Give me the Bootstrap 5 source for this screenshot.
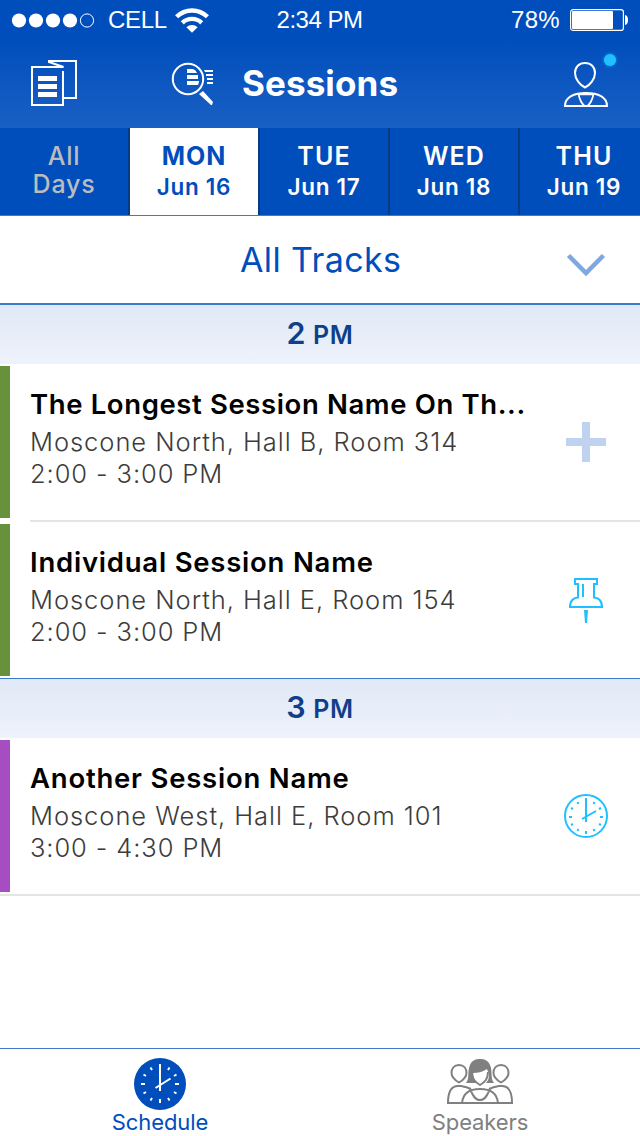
<!DOCTYPE html>
<html lang="en">
<head>
<meta charset="utf-8">
<meta name="viewport" content="width=device-width, initial-scale=1">
<title>Sessions</title>
<link rel="stylesheet" href="https://cdn.jsdelivr.net/npm/bootstrap@5.3.0/dist/css/bootstrap.min.css">
<style>
  body { font-family: Inter, "Open Sans", sans-serif; background: #fff; color: #000; }
  .app { width: 640px; height: 1136px; }
  svg { display: block; flex: none; overflow: visible; }
  .app-header { height: 128px; background: linear-gradient(#004ebc 0, #004ebc 40px, #1a60c4 100%); color: #fff; }
  .status { height: 40px; padding: 0 12px 0 11px; font: 24px/40px "Liberation Sans", sans-serif; }
  .status > div { flex: 1 1 0; }
  .cell-name { margin: 0 8px 0 13px; letter-spacing: -.35px; }
  .clock-text { letter-spacing: -.5px; }
  .charge { margin-right: 10px; letter-spacing: .3px; }
  .titlebar { height: 88px; padding: 0 22px 0 30px; }
  .titlebar h1 { font-size: 35px; font-weight: 700; line-height: 88px; margin: -2px 0 0 27px; letter-spacing: .1px; }
  .find-icon { margin-left: 93px; }
  .profile-icon { margin-bottom: 10px; }
  .days { height: 88px; background: #004ebc; border-bottom: 1px solid #3d79cc; }
  .day { flex: 0 0 130px; border-right: 2px solid #083b83; color: #fff; font-weight: 600; font-size: 22.5px; line-height: 30px; padding-top: 13px; letter-spacing: .7px; }
  .day b { display: block; font-weight: 600; font-size: 25px; letter-spacing: 1.1px; height: 31px; }
  .day.all { color: #bcbcbc; font-size: 25px; line-height: 28px; padding-top: 14px; font-weight: 500; letter-spacing: .8px; }
  .day.active { background: #fff; color: #004ebc; }
  .day.active b { font-weight: 700; letter-spacing: .9px; }
  .tracks { height: 89px; border-bottom: 2px solid #3d79cc; color: #004ebc; padding-right: 35px; }
  .tracks span { font-size: 34px; line-height: 87px; letter-spacing: .4px; margin-left: 240px; font-weight: 400; }
  .hour { height: 59px; background: linear-gradient(#e0e9f6, #eef2fb); color: #0f3f8a; font-weight: 600; font-size: 25px; line-height: 56px; letter-spacing: .6px; }
  .hour b { font-size: 30.5px; font-weight: 600; }
  .session { height: 158px; padding: 2px 0 0; }
  .stripe { width: 10px; height: 152px; background: #68913b; flex: none; }
  .stripe.violet { background: #a64dc1; }
  .info { margin-left: 20px; border-bottom: 2px solid #e4e4e4; padding: 22px 31px 0 0; height: 156px; }
  .info h2 { font-size: 27.5px; font-weight: 600; line-height: 32px; margin: 0 0 6px; letter-spacing: .78px; white-space: nowrap; }
  .info .long-title { letter-spacing: .62px; }
  .info p { font-size: 25.5px; font-weight: 300; line-height: 32px; margin: 0; color: #3c3c3c; letter-spacing: .96px; }
  .info p + p { letter-spacing: .9px; }
  .session.before-hour { height: 156px; }
  .before-hour .info { border: 0; height: 154px; }
  .before-hour + .hour { border-top: 1px solid #3d79cc; height: 60px; }
  .session.last-one { border-bottom: 2px solid #e4e4e4; }
  .last-one .info { border: 0; height: 154px; }
  .action { margin-top: 31px; }
  .tabbar { height: 88px; border-top: 1px solid #3d79cc; font-size: 22px; line-height: 26px; color: #808080; }
  .tabbar a { color: inherit; text-decoration: none; letter-spacing: -.1px; }
  .tabbar a.active { color: #004ebc; }
</style>
</head>
<body>
<div class="app d-flex flex-column overflow-hidden mx-auto">
  <header class="app-header">
    <div class="status d-flex align-items-center">
      <div class="d-flex align-items-center">
        <svg width="84" height="16" viewBox="0 0 84 16"><g fill="#fff"><circle cx="8" cy="8.500" r="7.100"/><circle cx="25" cy="8.500" r="7.100"/><circle cx="42" cy="8.500" r="7.100"/><circle cx="59" cy="8.500" r="7.100"/></g><circle cx="76" cy="8.500" r="6.600" fill="none" stroke="#fff"/></svg>
        <span class="cell-name">CELL</span>
        <svg width="34" height="26" viewBox="0 0 34 26"><path d="M17 25.800l-5.600-5.600a8.300 8.300 0 0 1 11.200 0z" fill="#fff"/><path d="M1.600 9.800a22 22 0 0 1 30.800 0M7.300 15.800a14 14 0 0 1 19.400 0" fill="none" stroke="#fff" stroke-width="4.400"/></svg>
      </div>
      <span class="clock-text">2:34 PM</span>
      <div class="d-flex align-items-center justify-content-end">
        <span class="charge">78%</span>
        <svg width="58" height="22" viewBox="0 0 58 22"><rect x=".6" y=".6" width="52.800" height="20.800" rx="2.500" fill="none" stroke="#fff" stroke-width="1.200"/><rect x="2" y="2" width="41" height="18" rx="1" fill="#fff"/><path d="M55 6q3 .5 3 5t-3 5z" fill="#fff"/></svg>
      </div>
    </div>
    <div class="titlebar d-flex align-items-center">
      <svg width="48" height="48" viewBox="30 60 48 48"><path d="M63 71v34H32V67h31.500L49 62v-1h27v37H64" fill="none" stroke="#fff" stroke-width="2"/><path d="M38 76h19v5H38zm0 8h19v5H38zm0 8h19v5H38z" fill="#fff"/></svg>
      <svg class="find-icon" width="44" height="44" viewBox="171 62 44 44"><circle cx="188" cy="79" r="15.200" fill="none" stroke="#fff" stroke-width="2"/><path d="M187 69h6q3 1 4 4h-10zm0 6h11v4h-11zm0 6h12q0 2-1 4h-11zM204 70h9v2h-8zm2 4h7v2h-7zm1 4h6v2h-6zm0 4h6v2h-6zM199 94l4-3 10 11-1 3h-1z" fill="#fff"/></svg>
      <h1>Sessions</h1>
      <svg class="profile-icon ms-auto" width="56" height="56" viewBox="562 51 56 56"><defs><filter id="glow" x="-50%" y="-50%" width="200%" height="200%"><feGaussianBlur stdDeviation="1.5"/></filter></defs><circle cx="610" cy="60" r="6.500" fill="#1fb8ff" opacity=".5" filter="url(#glow)"/><circle cx="610" cy="60" r="6.100" fill="#20bfff"/><g fill="none" stroke="#fff" stroke-width="2"><path d="M585 63c-6 0-10 4-10 10 0 6 5 12 10 14.500 5-2.500 10-8.500 10-14.500 0-6-4-10-10-10zM565 106c0-9 9-13 21-13s21 4 21 13z"/><path d="M578.500 94q1.500 8 6 12M593.500 94q-1.500 8-6 12M579 94.500h14" stroke-width="1.700"/></g></svg>
    </div>
  </header>
  <nav class="days d-flex flex-nowrap text-center">
    <div class="day all">All<br>Days</div>
    <div class="day active"><b>MON</b>Jun 16</div>
    <div class="day"><b>TUE</b>Jun 17</div>
    <div class="day"><b>WED</b>Jun 18</div>
    <div class="day"><b>THU</b>Jun 19</div>
  </nav>
  <div class="tracks d-flex align-items-start justify-content-between">
    <span>All Tracks</span>
    <svg width="38" height="86" viewBox="567 216 38 86"><path d="M568.500 255.500l17.500 17.500 17.500-17.500" fill="none" stroke="#80a7df" stroke-width="4.500"/></svg>
  </div>
  <main class="flex-grow-1">
    <div class="hour text-center"><b>2</b> PM</div>
    <article class="session d-flex">
      <div class="stripe"></div>
      <div class="info flex-grow-1 d-flex justify-content-between">
        <div><h2 class="long-title">The Longest Session Name On Th...</h2><p>Moscone North, Hall B, Room 314</p><p>2:00 - 3:00 PM</p></div>
        <svg class="action" width="46" height="46" viewBox="-23 -23 46 46"><path d="M-4-20h8v16h16v8H4v16h-8V4h-16v-8h16z" fill="#bfd2ee"/></svg>
      </div>
    </article>
    <article class="session before-hour d-flex">
      <div class="stripe"></div>
      <div class="info flex-grow-1 d-flex justify-content-between">
        <div><h2>Individual Session Name</h2><p>Moscone North, Hall E, Room 154</p><p>2:00 - 3:00 PM</p></div>
        <svg class="action" width="46" height="46" viewBox="563 577 46 46"><path d="M575 579h22v5h-3v13.500c4 0 8 3 8 9.500h-32c0-6.500 4-9.500 8-9.500V584h-3zM583 584v13" fill="none" stroke="#20bfff" stroke-width="2"/><path d="M584 610h4l-1 13h-2z" fill="#20bfff"/></svg>
      </div>
    </article>
    <div class="hour text-center"><b>3</b> PM</div>
    <article class="session last-one d-flex">
      <div class="stripe violet"></div>
      <div class="info flex-grow-1 d-flex justify-content-between">
        <div><h2>Another Session Name</h2><p>Moscone West, Hall E, Room 101</p><p>3:00 - 4:30 PM</p></div>
        <svg class="action" width="46" height="46" viewBox="-23 -23 46 46"><g fill="none" stroke="#20bfff" stroke-width="2"><circle r="21"/><path d="M0-18V6M-4 3L10-5"/><path d="M0 15v3M-17 1h3M14 1h3M7.500 13l1 2M-7.500 13l-1 2M13 8l2 1M-13 8l-2 1M7.500-12l1-2M-7.500-12l-1-2M13-7l2-1M-13-7l-2-1"/></g></svg>
      </div>
    </article>
  </main>
  <nav class="tabbar d-flex text-center">
    <a href="#" class="active flex-fill w-50 d-flex flex-column align-items-center">
      <svg width="54" height="60" viewBox="-27 -35 54 60"><circle r="26" fill="#004ebc"/><g fill="none" stroke="#fff" stroke-width="2"><path d="M0-20V7M-4.500 4L10.500-5.500"/><path d="M0 15v4M-19 0h4M15 0h4M8-14l1.500-2.500M-8-14l-1.500-2.500M14-8l2.500-1.500M-14-8l-2.500-1.500M8 14l1.500 2.500M-8 14l-1.500 2.500M14 8l2.500 1.500M-14 8l-2.500 1.500"/></g></svg>
      <span>Schedule</span>
    </a>
    <a href="#" class="flex-fill w-50 d-flex flex-column align-items-center">
      <svg width="68" height="60" viewBox="446 1049 68 60"><g fill="none" stroke="#808080" stroke-width="2"><path d="M459 1065c-5 0-7.500 3.500-7.500 8 0 4 4 7.500 7.500 9.500 3.500-2 7.500-5.500 7.500-9.500 0-4.500-2.500-8-7.500-8zM501 1065c-5 0-7.500 3.500-7.500 8 0 4 4 7.500 7.500 9.500 3.500-2 7.500-5.500 7.500-9.500 0-4.500-2.500-8-7.500-8z"/><path d="M448 1103c0-12 4-17 10-17M470 1089c2 4 4 11 10 11s8-7 10-11M458 1086h3q6 1 10 3M502 1086h-3q-6 1-10 3M502 1086c6 0 10 5 10 17M447 1103h66M462 1103c1-10 8-14 18-14s17 4 18 14"/></g><path d="M466 1083c4-5 1-11 4-18 2-5 6-6 10-6s8 1 10 6c3 7 0 13 4 18h-8c3-3 3-6 3-10-1-2-2-3-2-4-5 3-9 4-14 4 0 5 2 8 4 10z" fill="#808080"/><path d="M472 1072c0 7 3 10 8 13 5-3 8-6 8-13" fill="none" stroke="#808080" stroke-width="2"/></svg>
      <span>Speakers</span>
    </a>
  </nav>
</div>
<script src="https://cdn.jsdelivr.net/npm/bootstrap@5.3.0/dist/js/bootstrap.bundle.min.js"></script>
</body>
</html>
